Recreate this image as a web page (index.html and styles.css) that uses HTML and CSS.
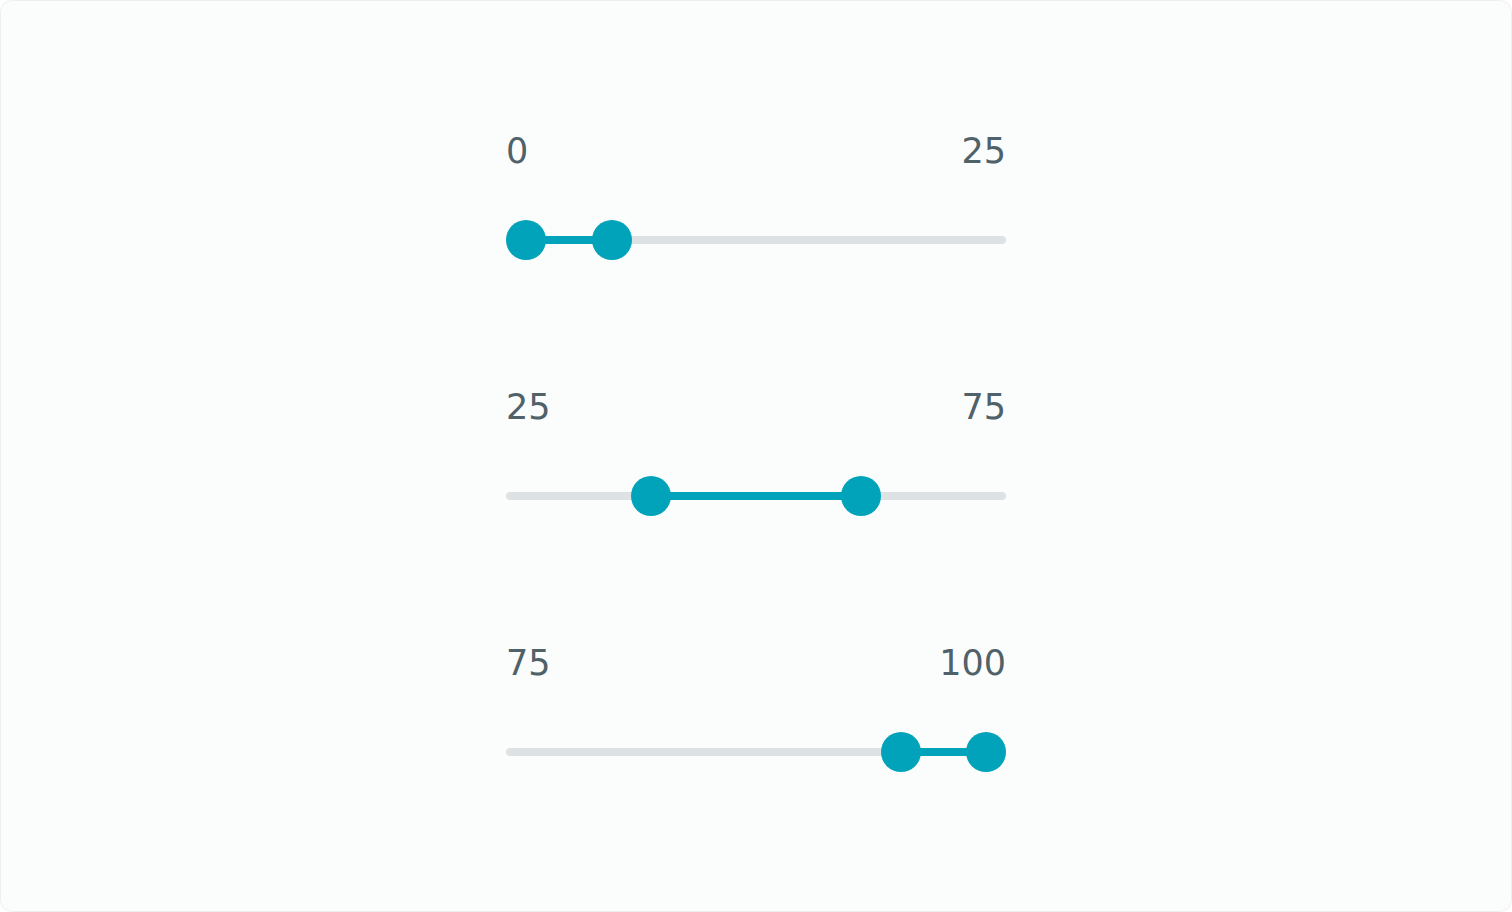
FILE: index.html
```html
<!DOCTYPE html>
<html lang="en">
<head>
<meta charset="utf-8">
<title>Range sliders</title>
<link rel="stylesheet" href="styles.css">
</head>
<body>
<main class="frame">
  <div class="sliders">
    <section class="range">
      <div class="range-labels"><span>0</span><span>25</span></div>
      <div class="range-track">
        <div class="range-fill" style="--from: 0; --to: 0.187"></div>
        <span class="range-thumb" style="--pos: 0"></span>
        <span class="range-thumb" style="--pos: 0.187"></span>
      </div>
    </section>
    <section class="range">
      <div class="range-labels"><span>25</span><span>75</span></div>
      <div class="range-track">
        <div class="range-fill" style="--from: 0.272; --to: 0.728"></div>
        <span class="range-thumb" style="--pos: 0.272"></span>
        <span class="range-thumb" style="--pos: 0.728"></span>
      </div>
    </section>
    <section class="range">
      <div class="range-labels"><span>75</span><span>100</span></div>
      <div class="range-track">
        <div class="range-fill" style="--from: 0.815; --to: 1"></div>
        <span class="range-thumb" style="--pos: 0.815"></span>
        <span class="range-thumb" style="--pos: 1"></span>
      </div>
    </section>
  </div>
</main>
</body>
</html>
```
FILE: styles.css
```css
* {
  box-sizing: border-box;
}

html,
body {
  margin: 0;
  background: #ffffff;
}

.frame {
  height: 912px;
  border: 1px solid #efefef;
  border-radius: 12px;
  background: #fbfcfc;
  display: flex;
  justify-content: center;
  padding-top: 131px;
  font-family: "DejaVu Sans", Verdana, sans-serif;
}

.sliders {
  width: 500px;
  display: flex;
  flex-direction: column;
  gap: 128px;
}

.range {
  display: flex;
  flex-direction: column;
  gap: 48px;
}

.range-labels {
  display: flex;
  justify-content: space-between;
  font-size: 35px;
  line-height: 38px;
  height: 40px;
  color: #4f6169;
}

/* track: 8px rail centred in a 40px row; thumbs travel inside it */
.range-track {
  position: relative;
  height: 40px;
}

.range-track::before {
  content: "";
  position: absolute;
  left: 0;
  right: 0;
  top: 16px;
  height: 8px;
  border-radius: 4px;
  background: #dde2e4;
}

.range-fill {
  position: absolute;
  top: 16px;
  height: 8px;
  left: calc(20px + var(--from) * (100% - 40px));
  width: calc((var(--to) - var(--from)) * (100% - 40px));
  background: #00a3b9;
}

.range-thumb {
  position: absolute;
  top: 0;
  left: calc(var(--pos) * (100% - 40px));
  width: 40px;
  height: 40px;
  border-radius: 50%;
  background: #00a3b9;
}
```
